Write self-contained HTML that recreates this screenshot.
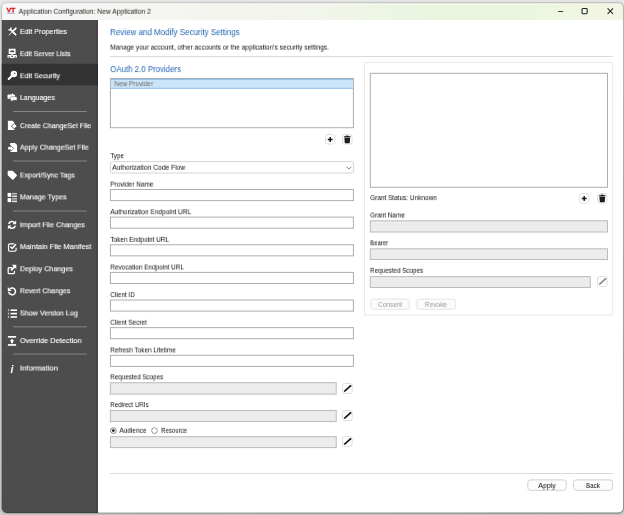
<!DOCTYPE html>
<html><head><meta charset="utf-8"><title>Application Configuration: New Application 2</title>
<style>
*{box-sizing:border-box;margin:0;padding:0}
html,body{width:624px;height:515px;overflow:hidden;background:linear-gradient(#e9e9e9 0%,#dedede 40%,#d0d0d0 100%);font-family:"Liberation Sans",sans-serif}
body{position:relative}
.a{position:absolute;transform-origin:0 50%}
.sd,.lb,.h1,svg{will-change:transform}
#clip{left:0;top:0;width:624px;height:515px}
#pg{left:0;top:0;width:624px;height:515px}
#fr{left:0;top:0;filter:drop-shadow(0 1px 2.5px rgba(0,0,0,.16))}
.sel{left:2.100px;top:63.8px;width:95.800px;height:21.6px;background:#333;border-right:1.3px solid #2b2b2b}
.sd{color:#fff;font-size:7.8px;line-height:10px;white-space:nowrap;-webkit-text-stroke:.12px #fff}
.sep{left:13px;width:73.800px;height:1px;background:#858585}
.lb{font-size:7.8px;color:#0c0c0c;white-space:nowrap;line-height:9px}
.h1{font-size:9.2px;color:#2266b4;white-space:nowrap;line-height:11px}
.in{border:1px solid #ababab;background:#fff}
.ro{border:1px solid #b9b9b9;background:#ececec}
.hr{height:1px;background:#dadada}
.sb{width:10.6px;height:10.6px;border:1px solid #e2e2e2;border-radius:2.5px;background:#fdfdfd}
.btn{border:1px solid #d2d2d2;border-bottom-color:#c4c4c4;border-radius:2px;background:#fdfdfd}
.dis{border-color:#e2e2e2;background:#fafafa}
svg{overflow:visible}
</style></head><body>
<div id="clip" class="a"><div id="pg" class="a">
<svg id="fr" class="a" width="624" height="515" viewBox="0 0 624 515">
<defs><linearGradient id="tg" x1="0" y1="0" x2="1" y2="0"><stop offset="0" stop-color="#f7f7f7"/><stop offset=".35" stop-color="#f4f4ef"/><stop offset=".52" stop-color="#f1f5ea"/><stop offset=".7" stop-color="#eaf5de"/><stop offset=".85" stop-color="#ecf6df"/><stop offset="1" stop-color="#f3f6e4"/></linearGradient>
<linearGradient id="bg" x1="0" y1="0" x2="1" y2="1"><stop offset="0" stop-color="#000" stop-opacity=".14"/><stop offset=".45" stop-color="#000" stop-opacity=".2"/><stop offset="1" stop-color="#000" stop-opacity=".35"/></linearGradient></defs>
<rect x="1.600" y="2.700" width="621.900" height="510.200" rx="5" fill="#fff"/>
</svg>
<svg class="a" style="left:0;top:0" width="624" height="515" viewBox="0 0 624 515">
<path d="M2.100 20V7.700A4.500 4.500 0 0 1 6.600 3.200H618.500A4.500 4.500 0 0 1 623 7.700V20z" fill="url(#tg)"/>
<path d="M1.800 20H97.900V512.900H6.600A4.800 4.800 0 0 1 1.800 508.100z" fill="#4d4d4d"/>
<path d="M96.600 20h1.300V512.900h-1.300z" fill="#424242"/>
<rect x="1.800" y="63.800" width="96.100" height="21.500" fill="#333"/><rect x="96.600" y="63.800" width="1.300" height="21.500" fill="#2b2b2b"/>
<path d="M13 111.500h73.800M13 161h73.800M13 211h73.800M13 326.800h73.800M13 354.100h73.800" stroke="#858585" stroke-width="1"/>
<path d="M2.100 4.200H623" stroke="#fafaf4" stroke-width="1" opacity=".7"/>
<rect x="1.600" y="2.700" width="621.900" height="510.200" rx="5" fill="none" stroke="url(#bg)" stroke-width="1.100"/>
</svg>
<svg class="a" style="left:0;top:0" width="624" height="515" viewBox="0 0 624 515"><rect x="110.4" y="78.5" width="243.0" height="49.2" rx="0" fill="#fff" stroke="#adadad" stroke-width="1"/><rect x="110.900" y="79" width="242" height="9.600" fill="#cce4f7"/><path d="M110.900 79.400h242M110.900 88.300h242" stroke="#86b9e6" stroke-width=".9"/><rect x="110.4" y="161.6" width="243.0" height="11.4" rx="2" fill="#fff" stroke="#d4d4d4" stroke-width="1"/><rect x="110.4" y="189.5" width="243.0" height="11.1" rx="0" fill="#fff" stroke="#adadad" stroke-width="1"/><rect x="110.4" y="217.13" width="243.0" height="11.1" rx="0" fill="#fff" stroke="#adadad" stroke-width="1"/><rect x="110.4" y="244.76" width="243.0" height="11.1" rx="0" fill="#fff" stroke="#adadad" stroke-width="1"/><rect x="110.4" y="272.39" width="243.0" height="11.1" rx="0" fill="#fff" stroke="#adadad" stroke-width="1"/><rect x="110.4" y="300.02" width="243.0" height="11.1" rx="0" fill="#fff" stroke="#adadad" stroke-width="1"/><rect x="110.4" y="327.65" width="243.0" height="11.1" rx="0" fill="#fff" stroke="#adadad" stroke-width="1"/><rect x="110.4" y="355.28" width="243.0" height="11.1" rx="0" fill="#fff" stroke="#adadad" stroke-width="1"/><rect x="110.4" y="382.7" width="225.8" height="11.4" rx="0" fill="#ececec" stroke="#bbbbbb" stroke-width="1"/><rect x="110.4" y="410.4" width="225.8" height="11.2" rx="0" fill="#ececec" stroke="#bbbbbb" stroke-width="1"/><rect x="110.4" y="436.7" width="225.8" height="10.9" rx="0" fill="#ececec" stroke="#bbbbbb" stroke-width="1"/><rect x="364.5" y="62.5" width="248.1" height="252.6" rx="0" fill="#fff" stroke="#e9e9e9" stroke-width="1"/><rect x="370.3" y="73.3" width="237.2" height="114.0" rx="0" fill="#fff" stroke="#adadad" stroke-width="1"/><rect x="370.3" y="220.8" width="237.2" height="11.2" rx="0" fill="#ececec" stroke="#bbbbbb" stroke-width="1"/><rect x="370.3" y="248.8" width="237.2" height="10.7" rx="0" fill="#ececec" stroke="#bbbbbb" stroke-width="1"/><rect x="370.3" y="276.6" width="220.0" height="10.9" rx="0" fill="#ececec" stroke="#bbbbbb" stroke-width="1"/><rect x="370.6" y="299.1" width="38.8" height="10.2" rx="2.5" fill="#fbfbfb" stroke="#e6e6e6" stroke-width="1"/><rect x="416.8" y="299.1" width="38.8" height="10.2" rx="2.5" fill="#fbfbfb" stroke="#e6e6e6" stroke-width="1"/><rect x="527.8" y="479.9" width="38.5" height="10.4" rx="2.5" fill="#fdfdfd" stroke="#d0d0d0" stroke-width="1"/><rect x="573.6" y="479.9" width="38.9" height="10.4" rx="2.5" fill="#fdfdfd" stroke="#d0d0d0" stroke-width="1"/></svg>

<svg class="a" style="left:6px;top:8px" width="11" height="6" viewBox="0 0 11 6"><text x="0.4" y="3.950" font-family="Liberation Sans,sans-serif" font-weight="bold" font-size="5.300" fill="#dd1f28" stroke="#dd1f28" stroke-width=".3" textLength="9" lengthAdjust="spacingAndGlyphs">VT</text><rect x="0.900" y="4.700" width="8" height="0.9" fill="#8d90b8"/></svg>
<div class="a lb" style="left:18px;top:6px;transform:translate(0.7px,0.8px) scaleX(0.8634);color:#1b1b1b">Application Configuration: New Application 2</div>
<svg class="a" style="left:555px;top:6px" width="62" height="10" viewBox="0 0 62 10"><g stroke="#222" stroke-width="1.05" fill="none"><path d="M3.200 5.500h4.900" stroke-width=".9"/><rect x="27" y="2.5" width="5.2" height="5.2" rx="0.9"/><path d="M52.6 2.4l5.4 5.4M58 2.4l-5.4 5.4"/></g></svg>
<div class="a sd" style="left:19px;top:26px;transform:translate(0.9px,0.95px) scaleX(0.921);">Edit Properties</div>
<div class="a sd" style="left:19px;top:49px;transform:translate(0.9px,0.15px) scaleX(0.8931);">Edit Server Lists</div>
<div class="a sd" style="left:19px;top:71px;transform:translate(0.9px,0.25px) scaleX(0.9159);">Edit Security</div>
<div class="a sd" style="left:19px;top:92px;transform:translate(0.9px,0.95px) scaleX(0.9069);">Languages</div>
<div class="a sd" style="left:19px;top:121px;transform:translate(0.9px,0.15px) scaleX(0.8975);">Create ChangeSet File</div>
<div class="a sd" style="left:19px;top:142px;transform:translate(0.9px,0.65px) scaleX(0.9135);">Apply ChangeSet File</div>
<div class="a sd" style="left:19px;top:170px;transform:translate(0.9px,0.55px) scaleX(0.9053);">Export/Sync Tags</div>
<div class="a sd" style="left:19px;top:192px;transform:translate(0.9px,0.35px) scaleX(0.9174);">Manage Types</div>
<div class="a sd" style="left:19px;top:220px;transform:translate(0.9px,0.25px) scaleX(0.9259);">Import File Changes</div>
<div class="a sd" style="left:19px;top:242px;transform:translate(0.9px,0.05px) scaleX(0.9414);">Maintain File Manifest</div>
<div class="a sd" style="left:19px;top:264px;transform:translate(0.9px,0.25px) scaleX(0.9192);">Deploy Changes</div>
<div class="a sd" style="left:19px;top:286px;transform:translate(0.9px,0.25px) scaleX(0.8927);">Revert Changes</div>
<div class="a sd" style="left:19px;top:308px;transform:translate(0.9px,0.45px) scaleX(0.9227);">Show Version Log</div>
<div class="a sd" style="left:19px;top:336px;transform:translate(0.9px,0.05px) scaleX(0.9475);">Override Detection</div>
<div class="a sd" style="left:19px;top:363px;transform:translate(0.9px,0.55px) scaleX(0.9765);">Information</div>
<svg class="a" style="left:0;top:0" width="100" height="400" viewBox="0 0 100 400">
<g fill="#fff" stroke="none">
<!-- tools -->
<g transform="translate(8.400,27.350) scale(.92)" fill="none" stroke="#fff" stroke-linecap="round">
 <path d="M3.300 3.300L7.800 7.800" stroke-width="2"/>
 <path d="M2.700.600Q2.200 2.300 3.300 3.300M.600 2.700Q2.300 2.200 3.300 3.300" stroke-width="1.500"/>
 <path d="M8.100 1L5.400 3.700" stroke-width="1.900"/>
 <path d="M5.400 3.700L.800 8.300" stroke-width=".95"/>
</g>
<!-- server lists -->
<g transform="translate(7.400,48.800)">
 <path d="M1.300 0h6.900v5.200H1.300zM2.800 1.700v1.800h3.900V1.700z" fill-rule="evenodd"/>
 <rect x="4.200" y="5.200" width="1.100" height="1.300"/>
 <rect x="0" y="6.300" width="9.600" height="2.500" rx=".6"/>
 <circle cx="4.750" cy="7.600" r="1.900"/>
 <circle cx="4.750" cy="7.600" r=".8" fill="#333"/>
 <rect x="1.200" y="7.200" width="1" height=".8" fill="#555"/><rect x="7.400" y="7.200" width="1" height=".8" fill="#555"/>
</g>
<!-- key -->
<g transform="translate(7.300,70.600)">
 <circle cx="6.600" cy="3.500" r="3.250"/>
 <path d="M5 4.900L1.400 8.500" stroke="#fff" stroke-width="2.100" stroke-linecap="round" fill="none"/>
 <circle cx="7.300" cy="2.800" r=".7" fill="#333"/>
</g>
<!-- languages -->
<g transform="translate(7.300,93)">
 <path d="M1.200 1.400h3.100L5.300.2 6.200 1.400h.600q.9 0 .9.900v2.600q0 .9-.9.900H1.200Q.2 5.800.2 4.900V2.300q0-.9 1-.9z"/>
 <path d="M3.800 3.700h5q.9 0 .9.900v1.800q0 .9-.9.900H5.700L4 9V7.300h-.2q-.9 0-.9-.9V4.600q0-.9.900-.9z" stroke="#4d4d4d" stroke-width=".45"/>
</g>
<!-- create changeset -->
<g transform="translate(7.900,120.800)">
 <path d="M0 0h4.600L6.500 1.900v7.400H0z"/>
 <path d="M6.400 2.500L9.200 5.400 6.400 8.200 3.600 5.400z" stroke="#4d4d4d" stroke-width=".9"/>
</g>
<!-- apply changeset -->
<g transform="translate(7.900,142.900)">
 <path d="M2.200 0h4.800L9.200 2.200v7H2.200z"/>
 <path d="M0 3.900h2.700V2.500L5.600 5.400 2.700 8.300V6.900H0z" stroke="#4d4d4d" stroke-width=".8"/>
 <path d="M.3 4.400h2.900V3.600L5 5.400 3.200 7.200V6.400H.3z"/>
</g>
<!-- tag -->
<g transform="translate(7.700,170.700)">
 <path d="M.7 0h3.800q.4 0 .7.300l3.800 3.800q.5.600 0 1.200L5.700 8.900q-.6.500-1.200 0L.3 4.900Q0 4.600 0 4.200V.7Q0 0 .7 0z"/>
 <circle cx="1.900" cy="1.900" r=".6" fill="#ddd"/>
</g>
<!-- manage types -->
<g transform="translate(7.600,192.900)">
 <rect x="0" y="0" width="3.600" height="4"/><rect x="0" y="5.200" width="3.600" height="4"/>
 <g fill="#cfcfcf"><rect x="4.500" y="0" width="4.900" height="4" fill="#8c8c8c"/><rect x="4.500" y="5.200" width="4.900" height="4" fill="#8c8c8c"/>
 <rect x="4.500" y=".1" width="4.900" height=".8"/><rect x="4.500" y="3.100" width="4.900" height=".9" fill="#fff"/><rect x="4.500" y="5.300" width="4.900" height=".8"/><rect x="4.500" y="8.300" width="4.900" height=".9" fill="#fff"/></g>
</g>
<!-- refresh -->
<g transform="translate(12,224.900)" fill="none" stroke="#fff" stroke-width="1.500">
 <path d="M-3.300-.9A3.400 3.400 0 0 1 2.700-2.100"/>
 <path d="M3.300.9A3.400 3.400 0 0 1-2.700 2.100"/>
 <path d="M4.100-4.300v3.600H.5z" fill="#fff" stroke="none"/>
 <path d="M-4.100 4.300V.700h3.600z" fill="#fff" stroke="none"/>
</g>
<!-- check square -->
<g transform="translate(7.900,243.200)" fill="none" stroke="#fff">
 <path d="M6.300.600H2Q.6.600.6 2v4.600q0 1.400 1.400 1.400h4.800q1.400 0 1.400-1.400V4.600" stroke-width="1.150"/>
 <path d="M2.500 3.400L4.400 5.300 8 1.100" stroke-width="1.500"/>
</g>
<!-- deploy -->
<g transform="translate(7.600,264.800)">
 <path d="M4.300 2.800H1.500Q.6 2.800.6 3.700v4.200q0 .9.900.9h4.400q.9 0 .9-.9V6" fill="none" stroke="#fff" stroke-width="1.250"/>
 <path d="M4.300 0h4.400v4.400L7.200 2.900 4 6.100 2.700 4.800 5.900 1.600z"/>
</g>
<!-- revert -->
<g transform="translate(12.100,291.400)" fill="none" stroke="#fff" stroke-width="1.500">
 <path d="M-3.400.3A3.400 3.400 0 1 0-2.200-2.600"/>
 <path d="M-4.300-4.300V-.4H-.4z" fill="#fff" stroke="none"/>
</g>
<!-- list -->
<g transform="translate(7.800,309)">
 <rect x="2.700" y=".4" width="6.500" height="1.600"/><rect x="2.700" y="3.800" width="6.500" height="1.600"/><rect x="2.700" y="7.200" width="6.500" height="1.600"/>
 <g fill="#d8d8d8"><rect x=".1" y=".2" width=".9" height="2"/><rect x=".1" y="3.600" width=".9" height="2"/><rect x=".1" y="7" width=".9" height="2"/></g>
</g>
<!-- override -->
<g transform="translate(7.900,336)">
 <rect x="0" y="0" width="8.200" height="1.700"/><rect x="0" y="8.100" width="8.200" height="1.700"/>
 <path d="M4.100 2.700L6.500 5.200H5.100v2.100H3.100V5.200H1.700z"/>
</g>
<text x="10.600" y="372.700" font-family="Liberation Sans,sans-serif" font-style="italic" font-weight="bold" font-size="10.500" fill="#fff">i</text>
</g></svg>

<div class="a h1" style="left:110px;top:27px;transform:translate(0.1px,0.11px) scaleX(0.8685);">Review and Modify Security Settings</div>
<div class="a lb" style="left:110px;top:42px;transform:translate(0.2px,0.6px) scaleX(0.8492);">Manage your account, other accounts or the application's security settings.</div>
<div class="hr a" style="left:110px;top:56px;width:503.300px"></div>
<div class="a h1" style="left:110px;top:64px;transform:translate(0.2px,0.11px) scaleX(0.8558);">OAuth 2.0 Providers</div>
<div class="a lb" style="left:114px;top:79px;transform:translate(0.3px,0.1px) scaleX(0.8291);color:#6a6a6a">New Provider</div>
<svg class="a" style="left:325.2px;top:133.7px" width="10.6" height="10.6" viewBox="0 0 10.6 10.6"><rect x=".5" y=".5" width="9.600" height="9.600" rx="2.300" fill="#fdfdfd" stroke="#e0e0e0"/><path d="M5.2 3.100v4.800M2.800 5.500h4.800" stroke="#111" stroke-width="1.400" fill="none"/></svg>
<svg class="a" style="left:342.3px;top:133.7px" width="10.6" height="10.6" viewBox="0 0 10.6 10.6"><rect x=".5" y=".5" width="9.600" height="9.600" rx="2.300" fill="#fdfdfd" stroke="#e0e0e0"/><path d="M1.900 3.300V2.500q0-.3.300-.3H4.100l.3-.7h1.700l.3.700h1.900q.3 0 .3.300v.8zM2.400 3.800h5.700l-.35 4.800q-.05.600-.65.600H3.400q-.6 0-.65-.6z" fill="#151515"/><path d="M4.200 4.600v3.700M5.250 4.600v3.700M6.300 4.600v3.700" stroke="#444" stroke-width=".35"/></svg>
<div class="a lb" style="left:110px;top:151px;transform:translate(0.3px,0.1px) scaleX(0.8104);">Type</div>
<div class="a lb" style="left:112px;top:162px;transform:translate(0.2px,0.8px) scaleX(0.8593);">Authorization Code Flow</div>
<svg class="a" style="left:345.5px;top:165.5px" width="6" height="4" viewBox="0 0 6 4"><path d="M0.600.7l2.400 2.400 2.400-2.400" stroke="#666" stroke-width="0.8" fill="none"/></svg>
<div class="a lb" style="left:110px;top:179px;transform:translate(0.3px,0.6px) scaleX(0.8288);">Provider Name</div>
<div class="a lb" style="left:110px;top:207px;transform:translate(0.3px,0.23px) scaleX(0.8407);">Authorization Endpoint URL</div>
<div class="a lb" style="left:110px;top:234px;transform:translate(0.3px,0.86px) scaleX(0.8208);">Token Endpoint URL</div>
<div class="a lb" style="left:110px;top:262px;transform:translate(0.3px,0.49px) scaleX(0.8215);">Revocation Endpoint URL</div>
<div class="a lb" style="left:110px;top:290px;transform:translate(0.3px,0.12px) scaleX(0.8226);">Client ID</div>
<div class="a lb" style="left:110px;top:317px;transform:translate(0.3px,0.75px) scaleX(0.8176);">Client Secret</div>
<div class="a lb" style="left:110px;top:345px;transform:translate(0.3px,0.38px) scaleX(0.824);">Refresh Token Lifetime</div>
<div class="a lb" style="left:110px;top:372px;transform:translate(0.3px,0.3px) scaleX(0.8028);">Requested Scopes</div>
<svg class="a" style="left:342.2px;top:382.6px" width="10.7" height="11.1" viewBox="0 0 10.7 11.1"><rect x=".5" y=".5" width="9.700" height="10.100" rx="2.300" fill="#fdfdfd" stroke="#e0e0e0"/><path d="M1.800 9.100l.6-1.800 5.800-5.300q.3-.2.600.1l.5.500q.2.300 0 .6L3.500 8.500z" fill="#151515"/></svg>
<div class="a lb" style="left:110px;top:400px;transform:translate(0.3px,0.1px) scaleX(0.7892);">Redirect URIs</div>
<svg class="a" style="left:342.2px;top:410.3px" width="10.7" height="11.1" viewBox="0 0 10.7 11.1"><rect x=".5" y=".5" width="9.700" height="10.100" rx="2.300" fill="#fdfdfd" stroke="#e0e0e0"/><path d="M1.800 9.100l.6-1.800 5.800-5.300q.3-.2.600.1l.5.500q.2.300 0 .6L3.500 8.500z" fill="#151515"/></svg>
<svg class="a" style="left:110px;top:427px" width="50" height="7" viewBox="0 0 50 7"><circle cx="3.300" cy="3.600" r="2.850" fill="#fff" stroke="#333" stroke-width="0.600"/><circle cx="3.300" cy="3.600" r="1.350" fill="#151515"/><circle cx="44.500" cy="3.600" r="2.850" fill="#fff" stroke="#555" stroke-width="0.600"/></svg>
<div class="a lb" style="left:119px;top:425px;transform:translate(0.4px,0.8px) scaleX(0.8304);">Audience</div>
<div class="a lb" style="left:161px;top:425px;transform:translate(0.1px,0.8px) scaleX(0.776);">Resource</div>
<svg class="a" style="left:342.2px;top:436.4px" width="10.7" height="11.1" viewBox="0 0 10.7 11.1"><rect x=".5" y=".5" width="9.700" height="10.100" rx="2.300" fill="#fdfdfd" stroke="#e0e0e0"/><path d="M1.800 9.100l.6-1.800 5.800-5.300q.3-.2.600.1l.5.500q.2.300 0 .6L3.500 8.500z" fill="#151515"/></svg>
<div class="a lb" style="left:370px;top:193px;transform:translate(0.1px,0.1px) scaleX(0.8287);">Grant Status: Unknown</div>
<svg class="a" style="left:579.4px;top:193.4px" width="10.6" height="10.6" viewBox="0 0 10.6 10.6"><rect x=".5" y=".5" width="9.600" height="9.600" rx="2.300" fill="#fdfdfd" stroke="#e0e0e0"/><path d="M5.2 3.100v4.800M2.800 5.500h4.800" stroke="#111" stroke-width="1.400" fill="none"/></svg>
<svg class="a" style="left:596.6px;top:193.4px" width="10.6" height="10.6" viewBox="0 0 10.6 10.6"><rect x=".5" y=".5" width="9.600" height="9.600" rx="2.300" fill="#fdfdfd" stroke="#e0e0e0"/><path d="M1.900 3.300V2.500q0-.3.300-.3H4.100l.3-.7h1.700l.3.700h1.900q.3 0 .3.300v.8zM2.400 3.800h5.700l-.35 4.800q-.05.600-.65.600H3.400q-.6 0-.65-.6z" fill="#151515"/><path d="M4.200 4.600v3.700M5.250 4.600v3.700M6.300 4.600v3.700" stroke="#444" stroke-width=".35"/></svg>
<div class="a lb" style="left:370px;top:210px;transform:translate(0.1px,0.5px) scaleX(0.8171);">Grant Name</div>
<div class="a lb" style="left:370px;top:238px;transform:translate(0.1px,0.3px) scaleX(0.7776);">Bearer</div>
<div class="a lb" style="left:370px;top:265px;transform:translate(0.1px,0.8px) scaleX(0.8044);">Requested Scopes</div>
<svg class="a" style="left:596.6px;top:276.4px" width="10.7" height="11.1" viewBox="0 0 10.7 11.1"><rect x=".5" y=".5" width="9.700" height="10.100" rx="2.300" fill="#fdfdfd" stroke="#e0e0e0"/><path d="M1.800 9.100l.6-1.800 5.800-5.300q.3-.2.600.1l.5.500q.2.300 0 .6L3.500 8.500z" fill="#8a8a8a"/></svg>
<div class="a lb" style="left:378px;top:299px;transform:translate(0px,0.9px) scaleX(0.84);color:#9b9b9b">Consent</div>
<div class="a lb" style="left:424px;top:299px;transform:translate(0.8px,0.9px) scaleX(0.8359);color:#9b9b9b">Revoke</div>
<div class="hr a" style="left:110px;top:473px;width:503.300px"></div>
<div class="a lb" style="left:538px;top:481px;transform:translate(0.2px,0.0px) scaleX(0.8967);">Apply</div>
<div class="a lb" style="left:585px;top:481px;transform:translate(0.9px,0.0px) scaleX(0.8014);">Back</div>
</div></div>
</body></html>
